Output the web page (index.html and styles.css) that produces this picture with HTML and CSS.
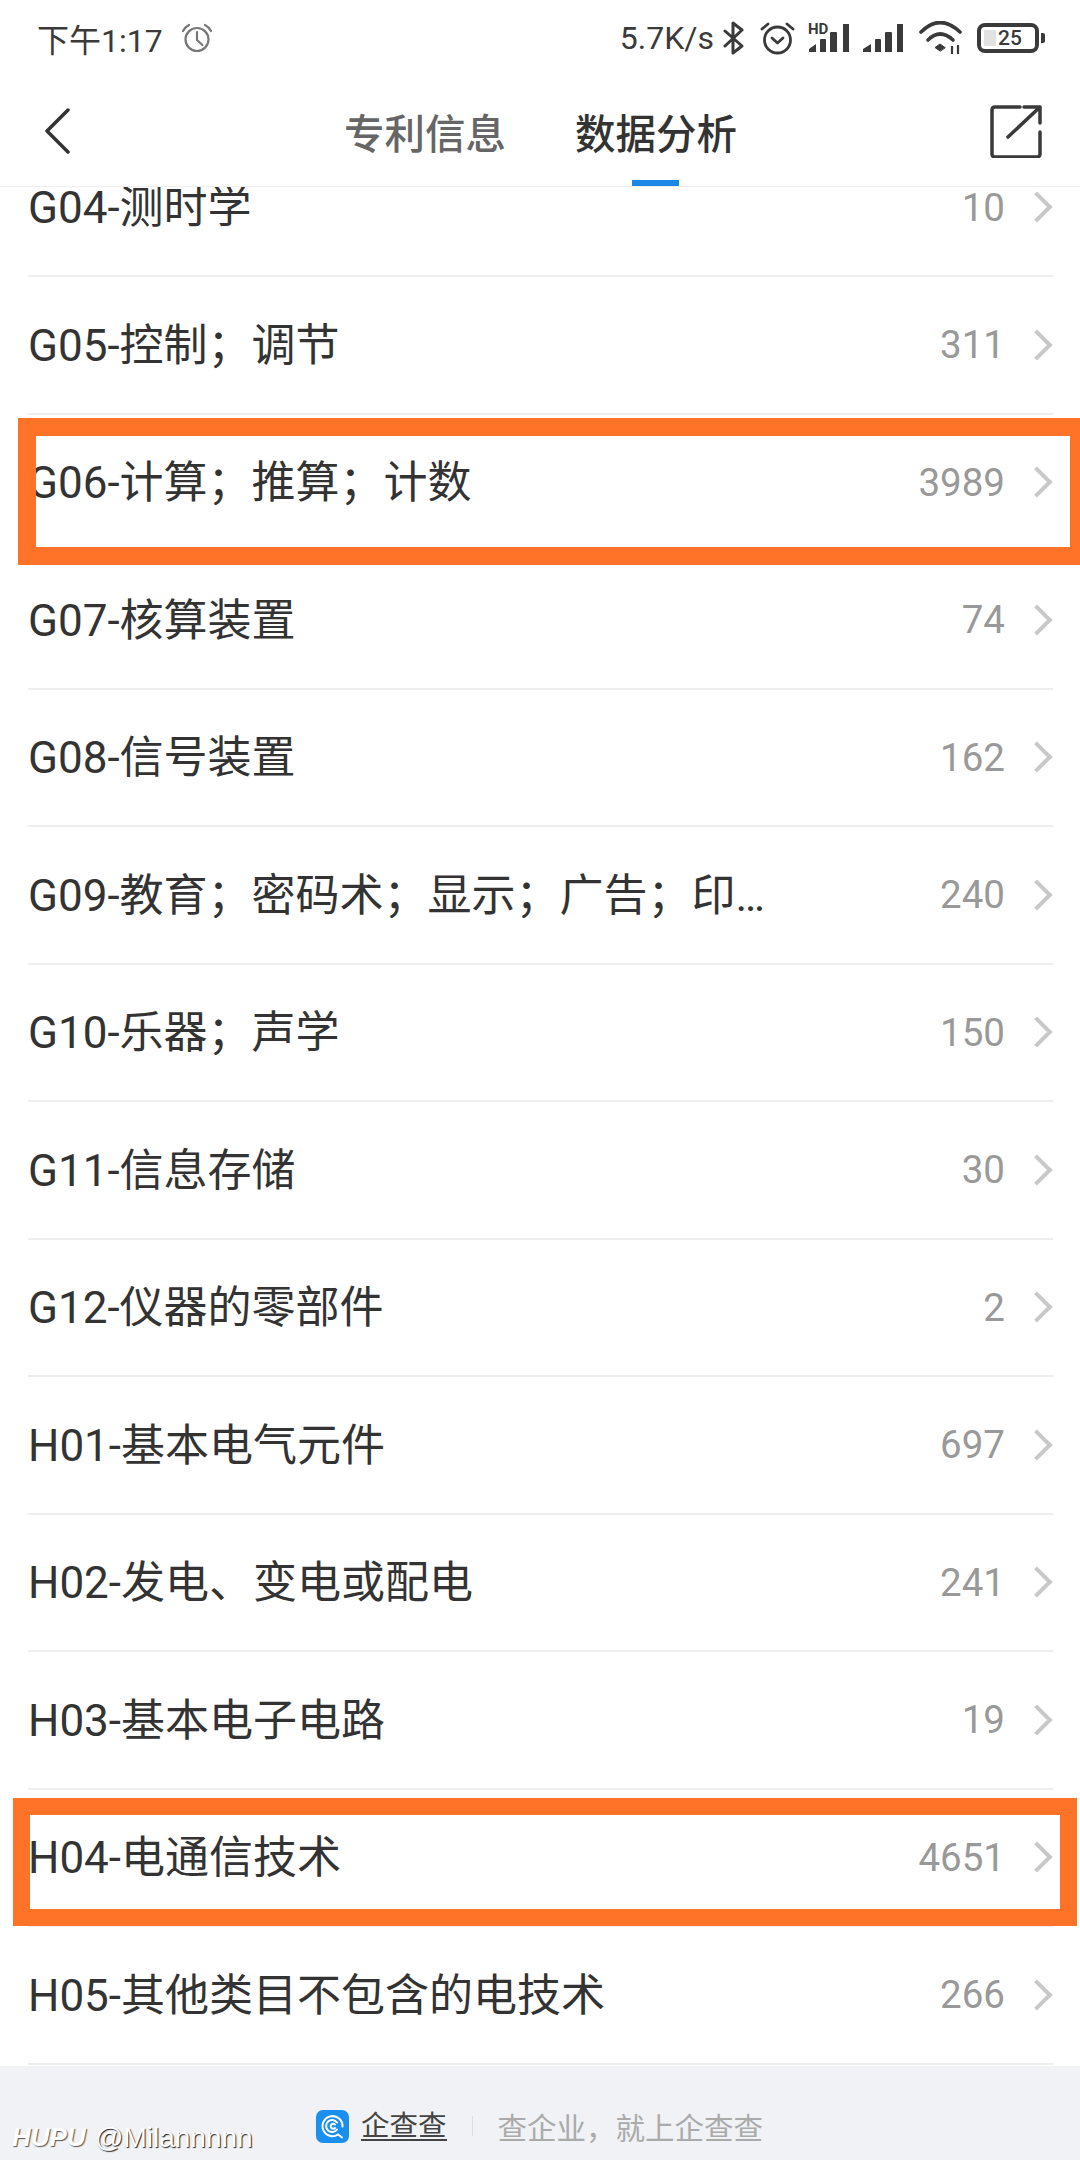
FILE: index.html
```html
<!DOCTYPE html>
<html lang="zh-CN">
<head>
  <meta charset="UTF-8">
  <meta name="viewport" content="width=device-width, initial-scale=1.0">
  <title>数据分析</title>
  <link rel="stylesheet" href="styles.css">
</head>
<body>
  <header class="top">
    <div class="status-bar">
      <div class="status-left">
        <span class="clock">下午1:17</span>
        <svg class="icon-clock" width="32" height="30" viewBox="0 0 32 30" fill="none" stroke="#777" stroke-width="2.200" stroke-linecap="round">
          <circle cx="16" cy="16.500" r="11.500"/>
          <path d="M16 9v8l5.500 5"/>
          <path d="M2 8q2-4 6-6M30 8q-2-4-6-6"/>
        </svg>
      </div>
      <div class="status-right">
        <span class="speed">5.7K/s</span>
        <svg class="icon-bt" width="21" height="34" viewBox="0 0 21 34" fill="none" stroke="#3a3a3a" stroke-width="3" stroke-linejoin="round" stroke-linecap="round">
          <path d="M2 10l17 15-9 7V2l9 7L2 25"/>
        </svg>
        <svg class="icon-alarm" width="35" height="34" viewBox="0 0 35 34" fill="none" stroke="#3a3a3a" stroke-width="2.800" stroke-linecap="round" stroke-linejoin="round">
          <circle cx="17.500" cy="19" r="13"/>
          <path d="M12 17l5.500 5 5.500-5"/>
          <path d="M2 8l6-5M33 8l-6-5"/>
        </svg>
        <svg class="icon-signal" width="41" height="30" viewBox="0 0 41 30">
          <text class="hd" x="0" y="11">HD</text>
          <path d="M1 29v-3l7-5v8zM12 29V17q0-1 1-1h4q1 0 1 1v12zM22 29V10q0-1 1-1h5q1 0 1 1v19zM35 29V1h6v28z" fill="#3a3a3a"/>
        </svg>
        <svg class="icon-signal-b" width="40" height="30" viewBox="0 0 40 30">
          <path d="M0 29v-3l8-5v8zM12 29V17q0-1 1-1h4q1 0 1 1v12zM22 29V10q0-1 1-1h5q1 0 1 1v19zM34 29V1h6v28z" fill="#3a3a3a"/>
        </svg>
        <svg class="icon-wifi" width="43" height="34" viewBox="0 0 43 34" fill="none" stroke="#3a3a3a" stroke-width="3.600" stroke-linecap="round">
          <path d="M2 11Q21-8 41 11"/>
          <path d="M9 19Q21 7 34 19"/>
          <path d="M21 30l-5-3.500 5-3.500 5 3.500z" fill="#3a3a3a" stroke-width="1"/>
          <path d="M33 25v8M39 24v9" stroke-width="2.200" stroke-linecap="butt"/>
        </svg>
        <div class="battery">
          <span class="battery-fill"></span>
          <span class="battery-num">25</span>
        </div>
        <span class="battery-nub"></span>
      </div>
    </div>
    <nav class="nav-bar">
      <svg class="back" width="25" height="46" viewBox="0 0 25 46" fill="none" stroke="#333" stroke-width="3.500" stroke-linecap="round" stroke-linejoin="round">
        <path d="M23 2L2 23l21 21"/>
      </svg>
      <div class="tabs">
        <a class="tab">专利信息</a>
        <a class="tab active">数据分析</a>
      </div>
      <svg class="share" width="52" height="54" viewBox="0 0 52 54" fill="none" stroke="#3a3a3a" stroke-width="3.500" stroke-linecap="round" stroke-linejoin="round">
        <path d="M30 3H5q-3 0-3 3v44q0 3 3 3h42q3 0 3-3V28"/>
        <path d="M18 33L50 3M34 3h16v16"/>
      </svg>
    </nav>
  </header>

  <main class="list">
    <div class="row"><span class="name">G04-测时学</span><span class="num">10</span><i class="arrow"></i></div>
    <div class="row"><span class="name">G05-控制&#65307;调节</span><span class="num">311</span><i class="arrow"></i></div>
    <div class="row"><span class="name">G06-计算&#65307;推算&#65307;计数</span><span class="num">3989</span><i class="arrow"></i></div>
    <div class="row"><span class="name">G07-核算装置</span><span class="num">74</span><i class="arrow"></i></div>
    <div class="row"><span class="name">G08-信号装置</span><span class="num">162</span><i class="arrow"></i></div>
    <div class="row"><span class="name">G09-教育&#65307;密码术&#65307;显示&#65307;广告&#65307;印刷</span><span class="num">240</span><i class="arrow"></i></div>
    <div class="row"><span class="name">G10-乐器&#65307;声学</span><span class="num">150</span><i class="arrow"></i></div>
    <div class="row"><span class="name">G11-信息存储</span><span class="num">30</span><i class="arrow"></i></div>
    <div class="row"><span class="name">G12-仪器的零部件</span><span class="num">2</span><i class="arrow"></i></div>
    <div class="row"><span class="name">H01-基本电气元件</span><span class="num">697</span><i class="arrow"></i></div>
    <div class="row"><span class="name">H02-发电、变电或配电</span><span class="num">241</span><i class="arrow"></i></div>
    <div class="row"><span class="name">H03-基本电子电路</span><span class="num">19</span><i class="arrow"></i></div>
    <div class="row"><span class="name">H04-电通信技术</span><span class="num">4651</span><i class="arrow"></i></div>
    <div class="row"><span class="name">H05-其他类目不包含的电技术</span><span class="num">266</span><i class="arrow"></i></div>
  </main>

  <footer class="foot">
    <svg class="logo" width="33" height="33" viewBox="0 0 33 33" fill="none" stroke="#fff" stroke-width="2" stroke-linecap="round">
      <rect width="33" height="33" rx="7" fill="#1a8fee" stroke="none"/>
      <path d="M22 24.500A10 10 0 1 1 26.500 16.500"/>
      <path d="M21 19.500A6 6 0 1 1 21 12.500"/>
      <path d="M19 14.500a2.500 2.500 0 1 0 0 3.500"/>
      <path d="M22 24.500l4 3"/>
    </svg>
    <span class="brand">企查查</span>
    <span class="sep"></span>
    <span class="slogan">查企业&#65292;就上企查查</span>
  </footer>

  <!-- hand-drawn markers over the list -->
  <div class="mark mark-a"></div>
  <div class="mark mark-b"></div>
  <div class="watermark"><em>HUPU</em><span>@Milannnnn</span></div>
</body>
</html>
```

FILE: styles.css
```css
* {
  box-sizing: border-box;
}

html, body {
  margin: 0;
  padding: 0;
}

body {
  position: relative;
  width: 1080px;
  height: 2160px;
  overflow: hidden;
  display: flex;
  flex-direction: column;
  background-color: #fff;
  color: #333;
  font-family: "Noto Sans", "Noto Sans CJK SC", sans-serif;
}

/* top bars */
.top {
  position: relative;
  z-index: 2;
  flex: 0 0 187px;
  background-color: #fff;
  border-bottom: 1px solid #eee;
}

.status-bar {
  height: 76px;
  display: flex;
  align-items: center;
  justify-content: space-between;
  padding: 0 35px 0 37px;
  color: #3a3a3a;
}

.status-left,
.status-right {
  display: flex;
  align-items: center;
}

.clock {
  font-size: 32px;
  font-family: "Roboto", "Noto Sans CJK SC", sans-serif;
}

.icon-clock {
  margin-left: 18px;
}

.speed {
  font-size: 32px;
  font-family: "Roboto", sans-serif;
}

.icon-bt {
  margin-left: 9px;
}

.icon-alarm {
  margin-left: 16px;
}

.icon-signal {
  margin-left: 13px;
}

.icon-signal-b {
  margin-left: 14px;
}

.icon-wifi {
  margin-left: 16px;
}

.hd {
  font-family: "Roboto", sans-serif;
  font-size: 15px;
  font-weight: 700;
  fill: #3a3a3a;
}

.battery {
  margin-left: 15px;
  width: 62px;
  height: 30px;
  border: 4px solid #3a3a3a;
  border-radius: 8px;
  display: flex;
  align-items: center;
  padding-left: 3px;
}

.battery-fill {
  width: 12px;
  height: 16px;
  background-color: #e2e2e2;
}

.battery-num {
  margin-left: 2px;
  font-family: "Roboto", sans-serif;
  font-size: 21px;
  font-weight: 500;
  line-height: 1;
}

.battery-nub {
  margin-left: 2px;
  width: 4px;
  height: 10px;
  border-radius: 0 2px 2px 0;
  background-color: #3a3a3a;
}

.nav-bar {
  height: 110px;
  display: flex;
  align-items: center;
  padding-left: 45px;
  padding-right: 38px;
}

.tabs {
  display: flex;
  align-self: stretch;
  gap: 69px;
  margin-left: 274px;
}

.tab {
  position: relative;
  display: flex;
  align-items: center;
  font-size: 40.5px;
  font-weight: 500;
  color: #666;
}

.tab.active {
  color: #333;
}

.tab.active::after {
  content: "";
  position: absolute;
  left: 57px;
  bottom: 0;
  width: 47px;
  height: 6px;
  background-color: #1a87e6;
}

.share {
  margin-left: auto;
}

/* list, scrolled so the first row sits partly under the top bars */
.list {
  flex: 1;
  min-height: 0;
  margin-top: -47.5px;
  padding: 0 27px 0 28px;
}

.row {
  height: 137.5px;
  display: flex;
  align-items: center;
  border-bottom: 2px solid #eeeeee;
}

.name {
  max-width: 745px;
  padding-bottom: 6px;
  overflow: hidden;
  white-space: nowrap;
  text-overflow: ellipsis;
  font-size: 44px;
  color: #333;
  font-family: "Roboto", "Noto Sans CJK SC", sans-serif;
}

.num {
  margin-left: auto;
  font-family: "Roboto", sans-serif;
  font-size: 38.5px;
  color: #999;
}

.arrow {
  width: 22px;
  height: 22px;
  margin: 0 5px 0 21px;
  border-top: 4px solid #c8c8c8;
  border-right: 4px solid #c8c8c8;
  transform: rotate(45deg);
}

.foot {
  flex: 0 0 94px;
  display: flex;
  align-items: center;
  padding-top: 26px;
  padding-left: 316px;
  background-color: #f0f2f5;
}

.logo {
  flex-shrink: 0;
}

.brand {
  margin-left: 12px;
  font-size: 28.5px;
  line-height: 28px;
  color: #444;
  border-bottom: 2px solid #444;
}

.sep {
  width: 1px;
  height: 20px;
  margin: 0 25px;
  background-color: #ddd;
}

.slogan {
  font-size: 29.5px;
  color: #aaa;
}

/* orange rectangles */
.mark {
  position: absolute;
  border: 17px solid #ff7329;
  z-index: 3;
}

.mark-a {
  left: 18px;
  top: 418px;
  width: 1070px;
  height: 147px;
  border-width: 18px;
}

.mark-b {
  left: 13px;
  top: 1798px;
  width: 1064px;
  height: 128px;
}

.watermark {
  position: absolute;
  left: 12px;
  top: 2122px;
  z-index: 4;
  display: flex;
  gap: 8px;
  font-family: "Liberation Sans", sans-serif;
  font-size: 28px;
  color: #fff;
  text-shadow: 1px 1px 1px #222;
}

.watermark em {
  width: 75px;
  font-size: 26px;
  font-weight: 700;
  text-shadow: 1px 1px 1px #555;
}
```
